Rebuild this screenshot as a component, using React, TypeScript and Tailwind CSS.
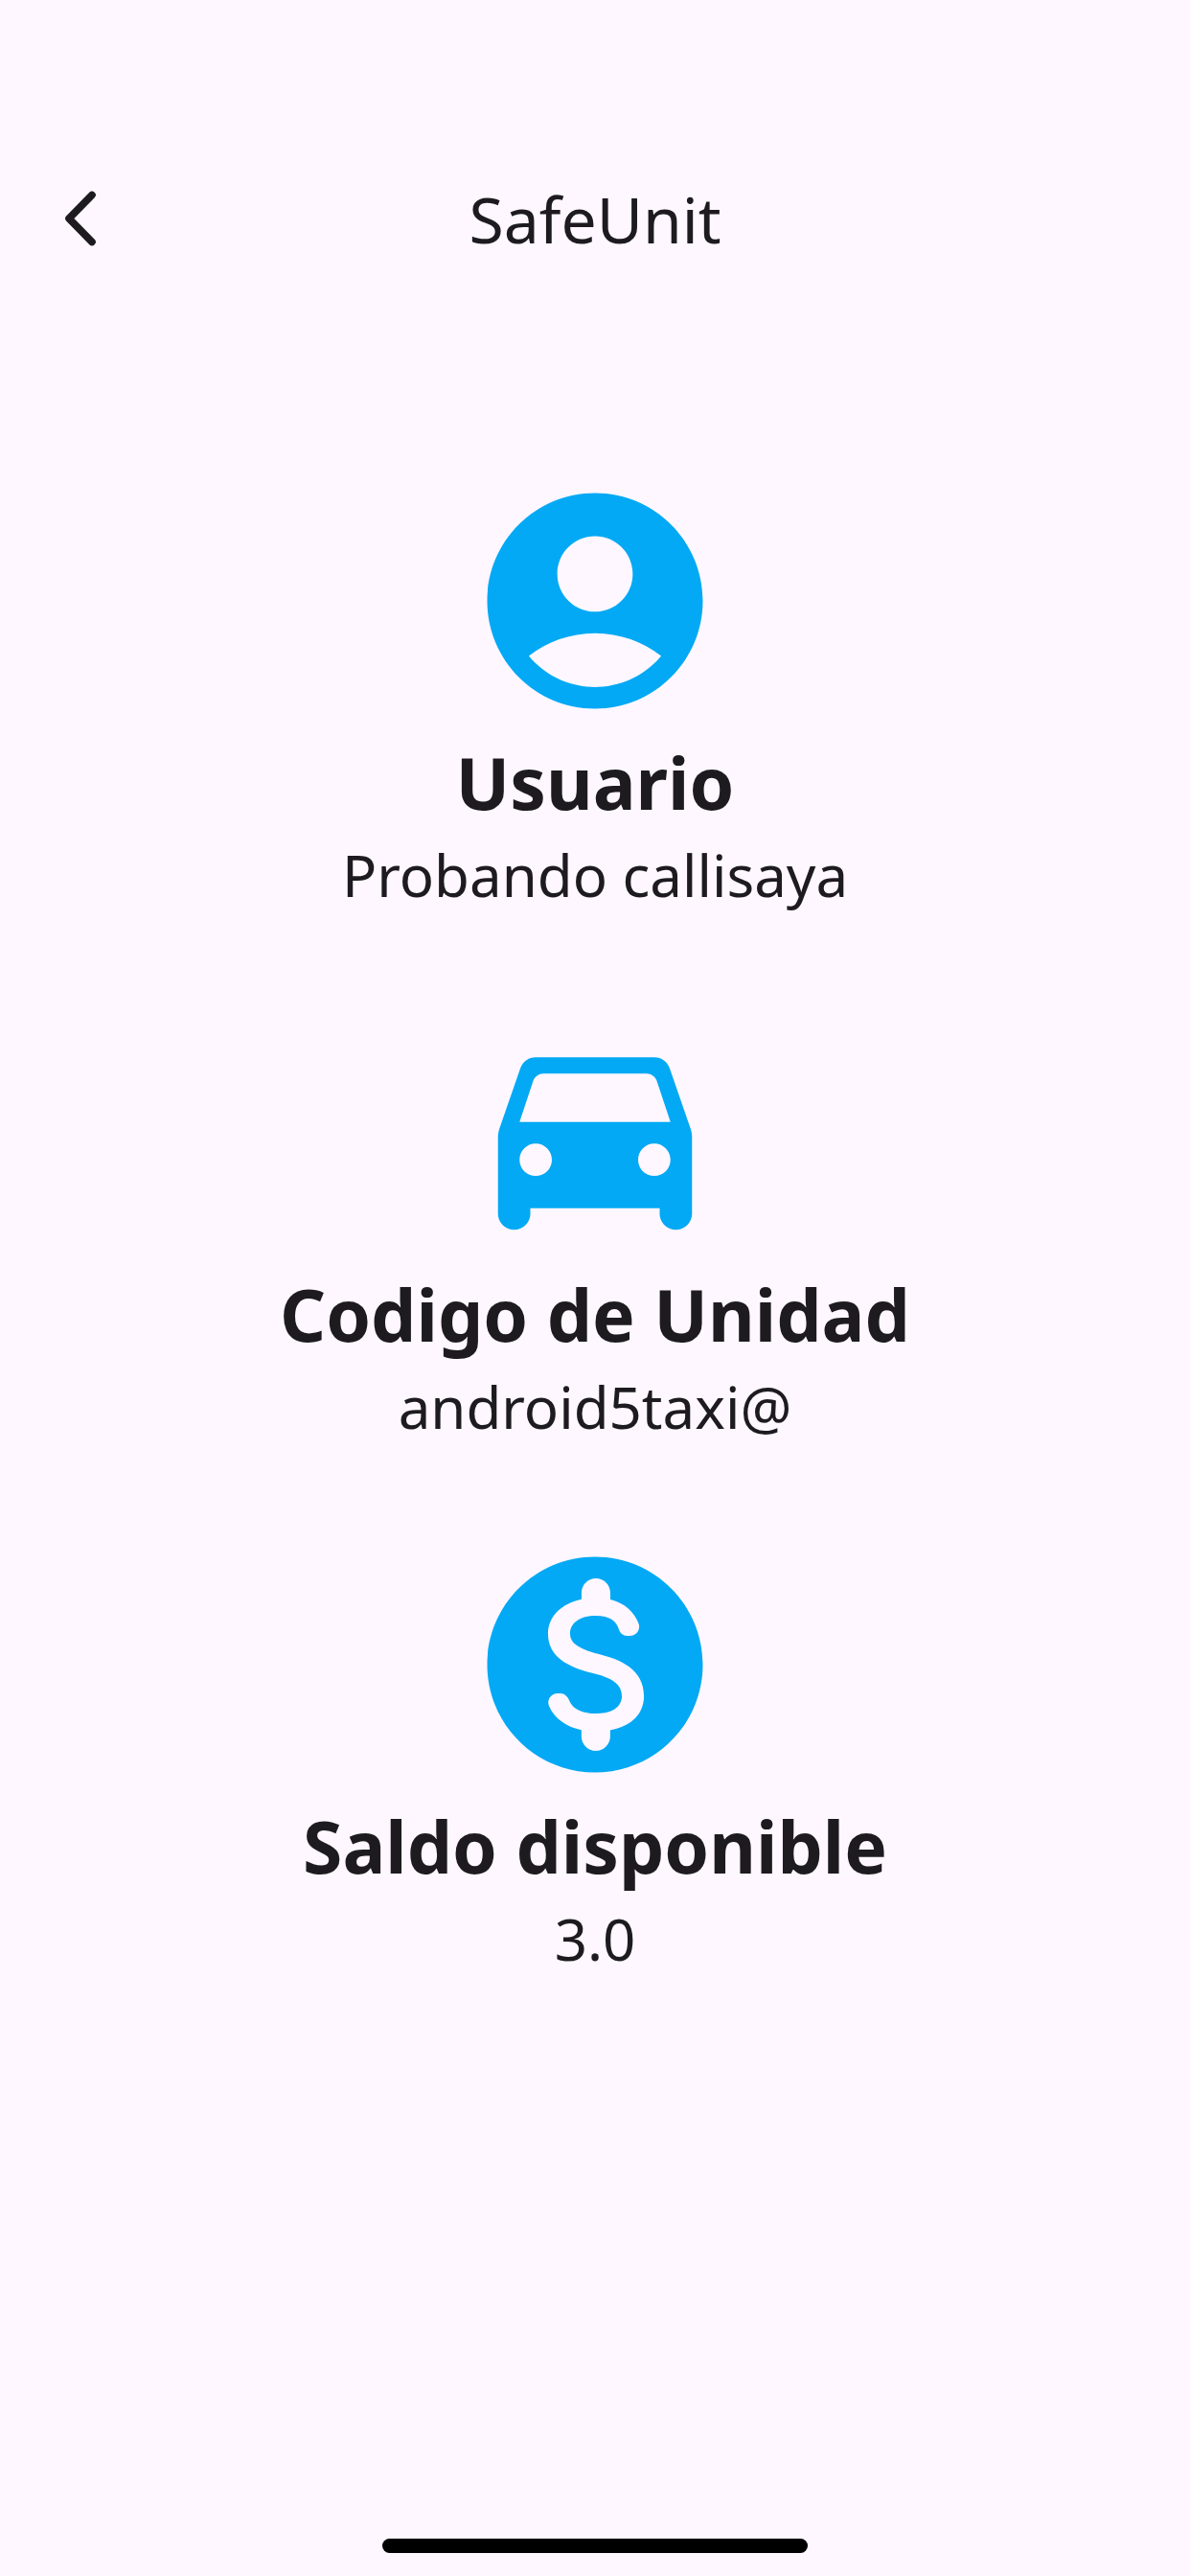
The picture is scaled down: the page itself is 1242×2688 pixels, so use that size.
import React from 'react';

interface InfoItem {
  title: string;
  value: string;
  icon: string;
}

// Rounded material shapes, 24x24 grid
const ICONS = {
  user: 'M12 2C6.48 2 2 6.48 2 12s4.48 10 10 10 10-4.48 10-10S17.52 2 12 2zm0 4c1.93 0 3.5 1.57 3.5 3.5S13.93 13 12 13s-3.5-1.57-3.5-3.5S10.07 6 12 6zm0 14c-2.03 0-4.43-.82-6.14-2.88C7.55 15.8 9.68 15 12 15s4.45.8 6.14 2.12C16.43 19.18 14.03 20 12 20z',
  car: 'M18.92 6.01C18.72 5.42 18.16 5 17.5 5h-11c-.66 0-1.21.42-1.42 1.01l-1.97 5.67c-.07.21-.11.43-.11.66v7.16c0 .83.67 1.5 1.5 1.5S6 20.33 6 19.5V19h12v.5c0 .82.67 1.5 1.5 1.5.82 0 1.5-.67 1.5-1.5v-7.16c0-.22-.04-.45-.11-.66l-1.97-5.67zM6.5 16c-.83 0-1.5-.67-1.5-1.5S5.67 13 6.5 13s1.5.67 1.5 1.5S7.33 16 6.5 16zm11 0c-.83 0-1.5-.67-1.5-1.5s.67-1.5 1.5-1.5 1.5.67 1.5 1.5-.67 1.5-1.5 1.5zM5 11l1.27-3.82c.14-.4.52-.68.95-.68h9.56c.43 0 .81.28.95.68L19 11H5z',
  money: 'M12 2C6.48 2 2 6.48 2 12s4.48 10 10 10 10-4.48 10-10S17.52 2 12 2zm1.41 16.09v.58c0 .73-.6 1.33-1.33 1.33h-.01c-.73 0-1.33-.6-1.33-1.33v-.6c-1.33-.28-2.51-1.01-3.01-2.24-.23-.55.2-1.16.8-1.16h.24c.37 0 .67.25.81.6.29.75 1.05 1.27 2.51 1.27 1.96 0 2.4-.98 2.4-1.59 0-.83-.44-1.61-2.67-2.14-2.48-.6-4.18-1.62-4.18-3.67 0-1.72 1.39-2.84 3.11-3.21v-.6c0-.73.6-1.33 1.33-1.33h.01c.73 0 1.33.6 1.33 1.33v.62c1.38.34 2.25 1.2 2.63 2.26.2.55-.22 1.13-.81 1.13h-.26c-.37 0-.67-.26-.77-.62-.23-.76-.86-1.25-2.12-1.25-1.5 0-2.4.68-2.4 1.64 0 .84.65 1.39 2.67 1.91s4.18 1.39 4.18 3.91c-.02 1.83-1.39 2.83-3.13 3.16z',
};

const items: InfoItem[] = [
  { title: 'Usuario', value: 'Probando callisaya', icon: ICONS.user },
  { title: 'Codigo de Unidad', value: 'android5taxi@', icon: ICONS.car },
  { title: 'Saldo disponible', value: '3.0', icon: ICONS.money },
];

const InfoBlock: React.FC<{ item: InfoItem }> = ({ item }) => (
  <section className="flex flex-col items-center text-center">
    <svg viewBox="0 0 24 24" className="size-[270px] fill-[#03a9f4]" aria-hidden="true">
      <path d={item.icon} />
    </svg>
    <h2 className="text-[75px] leading-[108px] font-bold">{item.title}</h2>
    <p className="text-[60px] leading-[86px]">{item.value}</p>
  </section>
);

export default function App() {
  return (
    <div className="flex min-h-screen flex-col bg-[#fef7ff] font-['Noto_Sans',sans-serif] text-[#1d1b20]">
      {/* Header */}
      <header className="grid grid-cols-[1fr_auto_1fr] items-center px-12 pt-36">
        <button type="button" aria-label="Volver" className="size-[72px]">
          <svg viewBox="0 0 72 72" className="size-full fill-none stroke-current" aria-hidden="true">
            <path d="M48 11.5L24 36l24 24.5" strokeWidth="7.6" strokeLinecap="round" strokeLinejoin="round" />
          </svg>
        </button>
        <h1 className="text-[66px] leading-[168px]">SafeUnit</h1>
      </header>

      <main className="flex flex-1 flex-col gap-[91px] pt-45">
        {items.map((item) => (
          <InfoBlock key={item.title} item={item} />
        ))}
      </main>

      {/* Home indicator */}
      <footer className="flex justify-center pb-6">
        <div className="h-[15px] w-[444px] rounded-full bg-black" />
      </footer>
    </div>
  );
}
